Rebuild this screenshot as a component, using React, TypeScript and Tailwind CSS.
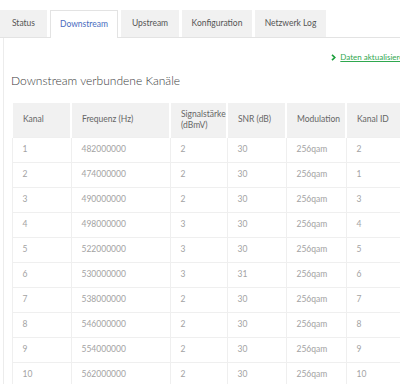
import React from 'react';

const tabs = [
    { label: 'Status', w: 'w-[47px]' },
    { label: 'Downstream', w: 'w-[68px]', active: true },
    { label: 'Upstream', w: 'w-[58px]' },
    { label: 'Konfiguration', w: 'w-[70px]' },
    { label: 'Netzwerk Log', w: 'w-[71px]' },
];

const rows = [
    ['1', '482000000', '2', '30', '256qam', '2'],
    ['2', '474000000', '2', '30', '256qam', '1'],
    ['3', '490000000', '2', '30', '256qam', '3'],
    ['4', '498000000', '3', '30', '256qam', '4'],
    ['5', '522000000', '3', '30', '256qam', '5'],
    ['6', '530000000', '3', '31', '256qam', '6'],
    ['7', '538000000', '2', '30', '256qam', '7'],
    ['8', '546000000', '2', '30', '256qam', '8'],
    ['9', '554000000', '2', '30', '256qam', '9'],
    ['10', '562000000', '2', '30', '256qam', '10'],
];

const colWidths = ['w-[59px]', 'w-[99px]', 'w-[57px]', 'w-[59px]', 'w-[60px]', 'w-[62px]'];
const headers = ['Kanal', 'Frequenz (Hz)', 'Signalstärke (dBmV)', 'SNR (dB)', 'Modulation', 'Kanal ID'];

export default function App() {
    return (
        <div className="w-[400px] h-[384px] overflow-hidden bg-white" style={{ fontFamily: 'Lato, "Liberation Sans", sans-serif' }}>
            <div className="w-[420px]">
                {/* Tabs */}
                <div className="flex gap-[3px] pt-[10px] border-b border-[#e3e3e3] h-[38px]">
                    {tabs.map((t) => (
                        <div
                            key={t.label}
                            className={
                                t.active
                                    ? `${t.w} h-[28px] bg-white border border-b-0 border-[#e3e3e3] flex items-center justify-center text-[8.5px] text-[#4a6cc0] -mb-px`
                                    : `${t.w} h-[27px] bg-[#f1f1f1] flex items-center justify-center text-[8.5px] text-[#555]`
                            }
                        >
                            {t.label}
                        </div>
                    ))}
                </div>

                {/* Panel */}
                <div className="ml-[3px] border-l border-[#ececec] pl-[7px] h-[360px]">
                    <div className="flex justify-end pr-[12px] pt-[10px] h-[28px]">
                        <div className="flex items-center gap-[4px] text-[8px] leading-[10px]">
                            <svg width="5" height="7" viewBox="0 0 5 7">
                                <path d="M1 0.8 L3.8 3.5 L1 6.2" stroke="#1a9e3a" strokeWidth="1.6" fill="none" />
                            </svg>
                            <span className="text-[#2fa84f] underline">Daten aktualisieren</span>
                        </div>
                    </div>

                    <h2 className="text-[12px] text-[#3a3a3a] font-light mt-[7px] leading-[16px]">Downstream verbundene Kanäle</h2>

                    <table className="mt-[14px] border-collapse text-[8.5px] text-left table-fixed w-[396px]">
                        <thead>
                            <tr className="bg-[#f1f1f1] h-[34px]">
                                {headers.map((h, i) => (
                                    <th
                                        key={h}
                                        className={`${colWidths[i]} font-normal text-[#666] px-[10px] leading-[11px] border-x-2 border-white`}
                                    >
                                        {h === 'Signalstärke (dBmV)' ? (
                                            <>Signalstärke<br />(dBmV)</>
                                        ) : h}
                                    </th>
                                ))}
                            </tr>
                        </thead>
                        <tbody>
                            {rows.map((r, ri) => (
                                <tr key={ri} className="h-[25px]">
                                    {r.map((c, ci) => (
                                        <td key={ci} className="px-[10px] text-[#a3a3a3] border border-[#efefef]">
                                            {c}
                                        </td>
                                    ))}
                                </tr>
                            ))}
                        </tbody>
                    </table>
                </div>
            </div>
        </div>
    );
}
